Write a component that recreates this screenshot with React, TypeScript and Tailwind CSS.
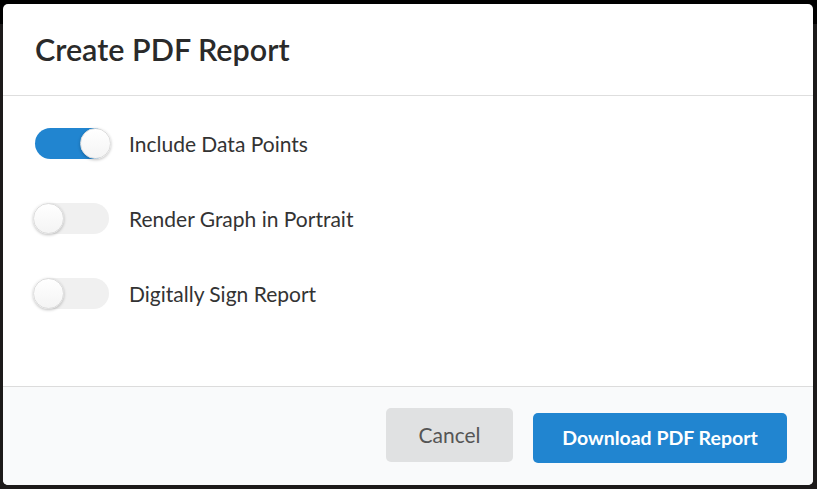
import { useState } from 'react';

const OPTIONS = [
  { id: 'points', label: 'Include Data Points', on: true },
  { id: 'portrait', label: 'Render Graph in Portrait', on: false },
  { id: 'sign', label: 'Digitally Sign Report', on: false },
];

function Toggle({ on, onChange }: { on: boolean; onChange: () => void }) {
  return (
    <button
      type="button"
      onClick={onChange}
      className={
        on
          ? 'relative h-[31px] w-[74px] shrink-0 rounded-full bg-[#2185d0]'
          : 'relative h-[31px] w-[74px] shrink-0 rounded-full bg-[#f0f0f0]'
      }
    >
      <span
        className={
          on
            ? 'absolute top-0 left-[45px] h-[31px] w-[31px] rounded-full border border-[#dcdcdc] bg-gradient-to-b from-white to-[#f4f4f4] shadow-[0_1px_3px_rgba(0,0,0,0.25)]'
            : 'absolute top-0 left-[-2px] h-[31px] w-[31px] rounded-full border border-[#dcdcdc] bg-gradient-to-b from-white to-[#f4f4f4] shadow-[0_1px_3px_rgba(0,0,0,0.25)]'
        }
      />
    </button>
  );
}

export default function App() {
  const [state, setState] = useState<Record<string, boolean>>(
    Object.fromEntries(OPTIONS.map((o) => [o.id, o.on])),
  );

  return (
    <div className="h-[489px] w-[817px] bg-[linear-gradient(#000_0,#000_24px,#1c1a1a_24px)] pt-[4px] pl-[3px] font-['Lato','Noto_Sans',sans-serif]">
      <div className="flex h-[481px] w-[810px] flex-col overflow-hidden rounded-[5px] bg-white">
        <div className="flex h-[92px] shrink-0 items-center border-b border-[#dedede] px-[32px]">
          <h1 className="text-[30.5px] font-semibold text-[#2a2a2a]">Create PDF Report</h1>
        </div>

        <div className="flex h-[290px] shrink-0 flex-col gap-[44px] px-[32px] pt-[32px]">
          {OPTIONS.map((o) => (
            <div key={o.id} className="flex h-[31px] items-center gap-[20px]">
              <Toggle
                on={state[o.id]}
                onChange={() => setState((s) => ({ ...s, [o.id]: !s[o.id] }))}
              />
              <span className="text-[21px] text-[#333]">{o.label}</span>
            </div>
          ))}
        </div>

        <div className="flex flex-1 items-start justify-end gap-[20px] border-t border-[#dcdcdc] bg-[#f9fafb] pt-[21px] pr-[26px]">
          <button
            type="button"
            className="h-[54px] w-[127px] rounded-[5px] bg-[#e0e1e2] text-[21px] text-[#555]"
          >
            Cancel
          </button>
          <button
            type="button"
            className="mt-[5px] h-[50px] w-[254px] rounded-[5px] bg-[#2185d0] text-[19.5px] font-bold text-white"
          >
            Download PDF Report
          </button>
        </div>
      </div>
    </div>
  );
}
